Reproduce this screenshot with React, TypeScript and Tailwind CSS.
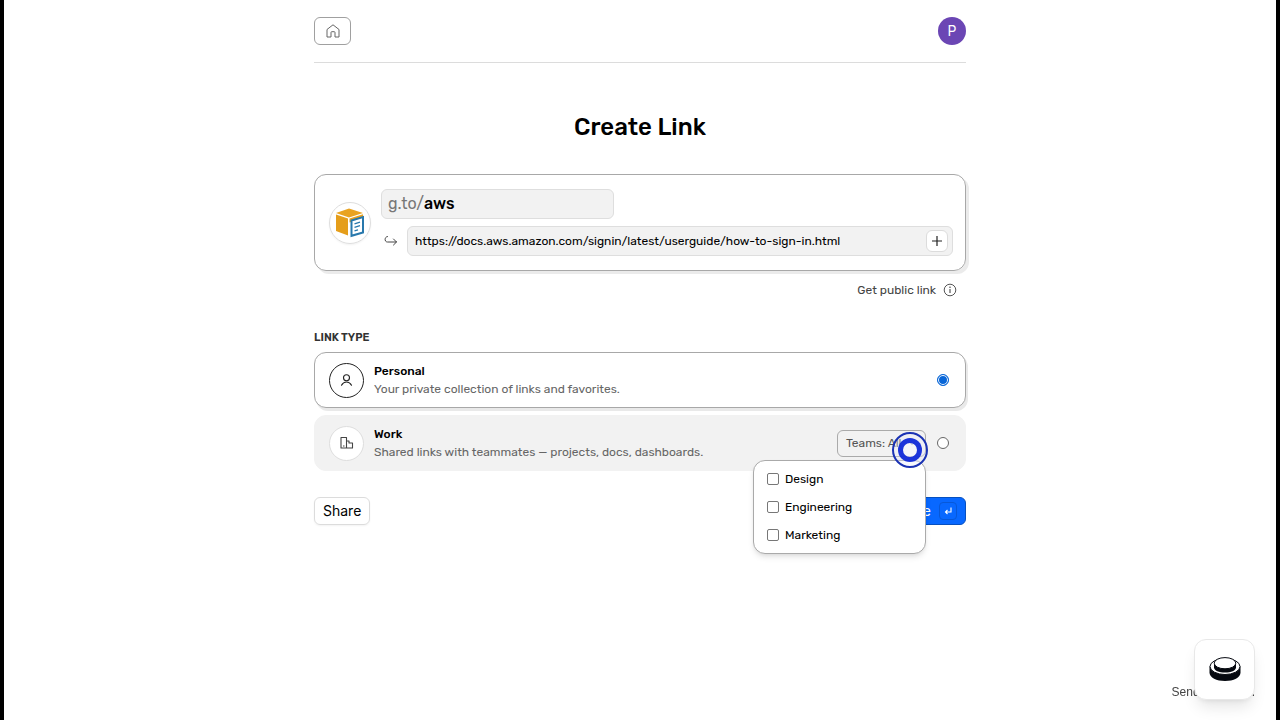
import { useState } from 'react';

interface LinkTypeCardProps {
  id: string;
  name: string;
  description: string;
  selected: boolean;
  onSelect: (id: string) => void;
  icon: React.ReactNode;
  children?: React.ReactNode;
}

const teams = ['Design', 'Engineering', 'Marketing'];

function HomeIcon() {
  return (
    <svg className="w-4 h-4" viewBox="0 0 16 16" fill="none" stroke="#666" strokeWidth="1">
      <path d="M2 6.500 8 1.800l6 4.700v7.500h-4v-4.500a.8.8 0 0 0-.8-.8H6.800a.8.8 0 0 0-.8.8V14H2z" strokeLinejoin="round" />
    </svg>
  );
}

function BoxLogo() {
  return (
    <svg className="w-[30px] h-[30px]" viewBox="0 0 30 30">
      <path d="M14 .5 28 5 14 9.500 1 5z" fill="#e9a321" />
      <path d="M1 6.500 13 10.500V27.500L1 23z" fill="#e59e1b" />
      <path d="M14.500 10.500 28 6.300v4L14.500 14.500z" fill="#e8a01c" />
      <path d="M16.500 12.500 28 9v15.500l-11.500 3.300z" fill="#fff" stroke="#2878ac" strokeWidth="2" />
      <path d="M19.500 15.800l5.500-1.600M19.500 19.300l5.500-1.600M19.500 22.800l3.500-1" stroke="#2878ac" strokeWidth="1.300" />
    </svg>
  );
}

function RedirectIcon() {
  return (
    <svg className="w-4 h-4" viewBox="0 0 16 16" fill="none" stroke="#444" strokeWidth="1" strokeLinecap="round" strokeLinejoin="round">
      <path d="M4.500 3.500C1.500 3.500 1 9 4.500 9h9M10.500 6l3 3-3 3" />
    </svg>
  );
}

function InfoIcon() {
  return (
    <svg className="w-3.5 h-3.5" viewBox="0 0 14 14" fill="none" stroke="#555" strokeWidth="1">
      <circle cx="7" cy="7" r="5.800" />
      <path d="M7 6v4" strokeWidth="1.200" />
      <circle cx="7" cy="4.200" r=".4" />
    </svg>
  );
}

function PersonIcon() {
  return (
    <svg className="w-3.5 h-3.5" viewBox="0 0 14 14" fill="none" stroke="#222" strokeWidth="1.100" strokeLinecap="round">
      <circle cx="6.500" cy="4.800" r="3" />
      <path d="M1.500 12.300C2.800 9.800 4.500 9 6.500 9s3.700.8 5 3.300" />
    </svg>
  );
}

function BuildingIcon() {
  return (
    <svg className="w-3.5 h-3.5" viewBox="0 0 14 14" fill="none" stroke="#444" strokeWidth="1.100" strokeLinejoin="round">
      <path d="M1 1.500h5.500v10.500H1zM6.500 5h2.500v2h3.500v5h-6M3 10h1.500" />
    </svg>
  );
}

function PuckIcon() {
  return (
    <svg className="w-8 h-[26px]" viewBox="0 0 32 26">
      <path d="M.5 9.500v6c0 5 7 8.500 15.500 8.500s15.500-3.500 15.500-8.500v-6z" fill="#05080f" />
      <ellipse cx="16" cy="9.500" rx="15" ry="8" fill="#fff" stroke="#05080f" strokeWidth="1" />
      <path d="M5 6.500v4c0 3 5 5 11 5s11-2 11-5v-4z" fill="#05080f" />
      <ellipse cx="16" cy="6.200" rx="10.800" ry="5.600" fill="#fff" stroke="#05080f" strokeWidth="1" />
    </svg>
  );
}

function LinkTypeCard({ id, name, description, selected, onSelect, icon, children }: LinkTypeCardProps) {
  return (
    <div
      className={`flex items-center h-14 px-3.5 rounded-xl border ${
        selected ? 'bg-white border-[#a8a8a8] shadow-[2px_3px_0_#e9e9e9]' : 'bg-[#f2f2f2] border-[#f2f2f2]'
      }`}
    >
      <div
        className={`flex items-center justify-center w-[35px] h-[35px] rounded-full bg-white border ${
          selected ? 'border-[#222]' : 'border-[#dedede]'
        }`}
      >
        {icon}
      </div>
      <label htmlFor={id} className="flex-1 ml-2.5">
        <span className="block text-[12px] leading-[18px] font-medium text-black">{name}</span>
        <span className="block text-[12px] leading-[18px] text-[#666]">{description}</span>
      </label>
      {children}
      <input
        id={id}
        type="radio"
        name="link-type"
        checked={selected}
        onChange={() => onSelect(id)}
        className="appearance-none w-3 h-3 mr-0.5 ml-[11px] rounded-full border border-[#666] bg-white checked:border-[#0866d8] checked:bg-[#0866d8] checked:shadow-[inset_0_0_0_1px_white]"
      />
    </div>
  );
}

export default function App() {
  const [linkType, setLinkType] = useState('personal');
  const [menuOpen, setMenuOpen] = useState(true);
  const [shortcut, setShortcut] = useState('aws');
  const [url, setUrl] = useState('https://docs.aws.amazon.com/signin/latest/userguide/how-to-sign-in.html');

  return (
    <div className="min-h-screen bg-white border-x-4 border-black font-['Rubik','Inter',sans-serif] text-black">
      <div className="max-w-[652px] mx-auto">
        {/* Header */}
        <header className="flex items-center justify-between pt-[17px] pb-[17px] border-b border-[#dcdcdc]">
          <button aria-label="Home" className="flex items-center justify-center w-[37px] h-7 rounded-md border border-[#a0a0a0]">
            <HomeIcon />
          </button>
          <button aria-label="Account" className="w-7 h-7 rounded-full bg-[#6b46b4] text-white font-['Inter',sans-serif] text-sm">
            P
          </button>
        </header>

        <main>
          <h1 className="mt-12 text-center text-[24px] leading-8 font-medium">Create Link</h1>

          {/* Link fields */}
          <section className="flex items-center mt-[31px] pl-3.5 py-3.5 pr-3 rounded-xl border border-[#a8a8a8] shadow-[3px_3px_0_#ebebeb]">
            <div className="flex items-center justify-center w-[42px] h-[42px] shrink-0 rounded-full border border-[#dedede] shadow-xs">
              <BoxLogo />
            </div>
            <div className="flex-1 ml-2.5">
              <div className="flex items-center w-[233px] h-[30px] px-1.5 rounded-md border border-[#dedede] bg-[#f2f2f2] text-[16px]">
                <label htmlFor="shortcut" className="text-[#777]">g.to/</label>
                <input
                  id="shortcut"
                  value={shortcut}
                  onChange={(e) => setShortcut(e.target.value)}
                  className="flex-1 min-w-0 font-medium outline-none"
                />
              </div>
              <div className="flex items-center mt-[7px]">
                <div className="w-[26px] pl-0.5">
                  <RedirectIcon />
                </div>
                <div className="flex flex-1 items-center h-[30px] pl-[7px] pr-1 rounded-md border border-[#dedede] bg-[#f2f2f2]">
                  <input
                    aria-label="Destination URL"
                    value={url}
                    onChange={(e) => setUrl(e.target.value)}
                    className="flex-1 min-w-0 text-[12px] outline-none"
                  />
                  <button aria-label="Add URL" className="flex items-center justify-center w-[22px] h-[22px] rounded-md border border-[#dcdcdc] bg-white">
                    <svg className="w-3 h-3" viewBox="0 0 12 12" stroke="#222" strokeWidth="1.200">
                      <path d="M6 1v10M1 6h10" />
                    </svg>
                  </button>
                </div>
              </div>
            </div>
          </section>

          <div className="flex justify-end mt-2.5 pr-[9px]">
            <button className="flex items-center gap-[7px] text-[12px] leading-[18px] text-[#444]">
              Get public link
              <InfoIcon />
            </button>
          </div>

          {/* Link type */}
          <h2 className="mt-[31px] text-[11px] leading-4 font-semibold text-[#333]">LINK TYPE</h2>
          <div className="flex flex-col gap-[7px] mt-1.5">
            <LinkTypeCard
              id="personal"
              name="Personal"
              description="Your private collection of links and favorites."
              selected={linkType === 'personal'}
              onSelect={setLinkType}
              icon={<PersonIcon />}
            />
            <LinkTypeCard
              id="work"
              name="Work"
              description="Shared links with teammates — projects, docs, dashboards."
              selected={linkType === 'work'}
              onSelect={setLinkType}
              icon={<BuildingIcon />}
            >
              <div className="relative">
                <button
                  onClick={() => setMenuOpen(!menuOpen)}
                  aria-expanded={menuOpen}
                  className="flex items-center gap-1.5 w-[89px] h-[27px] pl-2 rounded-md border border-[#aaa] text-[12px] text-[#555] whitespace-nowrap"
                >
                  Teams: All
                  <svg className="w-2 h-2" viewBox="0 0 8 8" fill="none" stroke="#555">
                    <path d="M1 2.500l3 3 3-3" />
                  </svg>
                </button>
                {menuOpen && (
                  <div className="absolute z-10 right-0 top-full mt-[3px] w-[173px] px-[13px] py-1 rounded-xl border border-[#aaa] bg-white shadow-md">
                    {teams.map((team) => (
                      <label key={team} className="flex items-center gap-1.5 h-[28px] text-[12px]">
                        <input type="checkbox" className="appearance-none w-3 h-3 rounded-[2px] border border-[#777]" />
                        {team}
                      </label>
                    ))}
                  </div>
                )}
                {/* Click marker */}
                <div className="absolute z-20 -right-0.5 top-0.5 flex items-center justify-center w-9 h-9 rounded-full border-2 border-[#1a32b4] bg-[#e4e8fb]/30 pointer-events-none">
                  <div className="w-6 h-6 rounded-full border-[5px] border-[#1029d8]/95 bg-white/40" />
                </div>
              </div>
            </LinkTypeCard>
          </div>

          {/* Actions */}
          <div className="flex items-center justify-between mt-[26px]">
            <button className="h-7 px-2 rounded-md border border-[#dcdcdc] shadow-xs font-['Inter',sans-serif] text-sm">Share</button>
            <button className="flex items-center gap-2 h-7 pl-3 pr-2 rounded-md border border-[#0750c0] bg-[#0868ff] font-['Inter',sans-serif] text-sm text-white">
              Create
              <span className="flex items-center justify-center w-[18px] h-[18px] rounded border border-[#0758d8]">
                <svg className="w-2.5 h-2.5" viewBox="0 0 10 10" fill="none" stroke="white" strokeWidth="1.100">
                  <path d="M8 1.500V6H2.500M4.500 4 2.500 6l2 2" />
                </svg>
              </span>
            </button>
          </div>
        </main>
      </div>

      <a href="#feedback" className="fixed right-[25px] bottom-[19px] font-['Liberation_Sans',sans-serif] text-[12px] leading-[18px] text-[#444]">
        Send feedback.
      </a>
      <button
        aria-label="Open assistant"
        className="fixed right-[25px] bottom-5 flex items-center justify-center w-[61px] h-[61px] rounded-xl border border-[#e8e8e8] bg-white shadow-lg"
      >
        <PuckIcon />
      </button>
    </div>
  );
}
